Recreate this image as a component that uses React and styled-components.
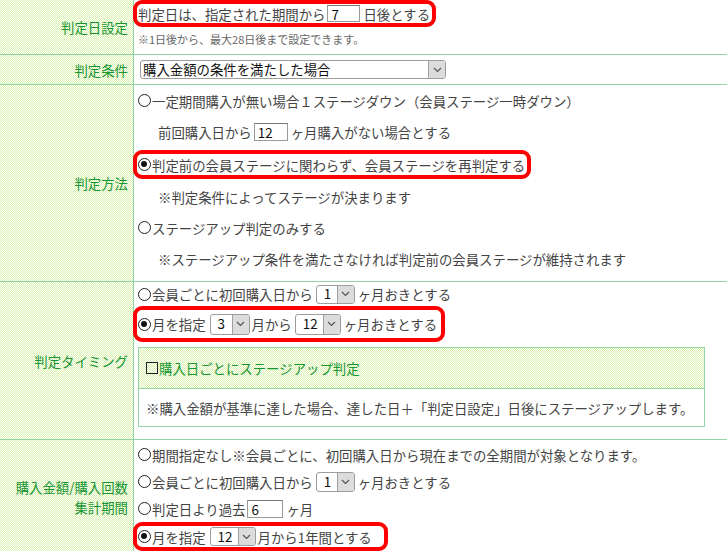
import React from "react"
import styled, { createGlobalStyle, css } from "styled-components"

const LINE = "#93d3a6"
const GREEN = "#16962f"

const GlobalStyle = createGlobalStyle`
    html, body {
        margin: 0;
        padding: 0;
        background: #fff;
        overflow: hidden;
    }
    body {
        font-family: "Noto Sans CJK JP", "Noto Sans", sans-serif;
        font-size: 13.4px;
        color: #444;
    }
`

const checker = css`
    background-color: #fff;
    background-image: repeating-conic-gradient(#d8f0ae 0 25%, #fff 0 50%);
    background-size: 2px 2px;
`

const Table = styled.div`
    width: 100%;
    display: flex;
    flex-direction: column;
`
const Row = styled.div`
    display: flex;
    border-bottom: 1px solid ${LINE};
`
const Label = styled.div`
    ${checker};
    width: 134px;
    flex-shrink: 0;
    box-sizing: border-box;
    border-right: 1px solid ${LINE};
    padding-right: 5px;
    display: flex;
    align-items: center;
    justify-content: flex-end;
    text-align: right;
    line-height: 20px;
    color: ${GREEN};
`
const Value = styled.div`
    flex: 1;
    min-width: 0;
    display: flex;
    flex-direction: column;
    align-items: flex-start;
    padding: ${(p) => p.$pad || "0"};
`
const Line = styled.div`
    display: flex;
    align-items: center;
    height: ${(p) => p.$h || 27}px;
    padding-left: ${(p) => p.$indent ?? 4}px;
    white-space: nowrap;
`
const Note = styled(Line)`
    font-size: 11px;
    color: #666;
`
const Highlight = styled.div`
    display: flex;
    align-items: center;
    box-sizing: border-box;
    height: ${(p) => p.$h}px;
    margin: ${(p) => p.$m || "0"};
    margin-left: -1px;
    padding: 0 ${(p) => p.$pr || 2}px 0 1px;
    border: 4px solid #f00;
    border-radius: 9px;
    white-space: nowrap;
`
const Radio = styled.span`
    position: relative;
    flex-shrink: 0;
    width: 13px;
    height: 13px;
    box-sizing: border-box;
    border: 1.5px solid #222;
    border-radius: 50%;
    margin-right: 1px;
    ${(p) => p.$checked && css`
        &::after {
            content: "";
            position: absolute;
            left: 2px;
            top: 2px;
            width: 6px;
            height: 6px;
            border-radius: 50%;
            background: #111;
        }
    `}
`
const Check = styled.span`
    flex-shrink: 0;
    width: 12px;
    height: 12px;
    box-sizing: border-box;
    border: 1.5px solid #222;
    margin-right: 1px;
`
const TextBox = styled.input`
    box-sizing: border-box;
    width: ${(p) => p.$w}px;
    height: ${(p) => p.$h || 18}px;
    margin: 0 3px 0 2px;
    padding: 0 0 0 3px;
    border: 1px solid #9a9a9a;
    border-top-color: #777;
    border-radius: 0;
    font: inherit;
    line-height: 1;
    color: #111;
    background: #fff;
    outline: none;
`
const SelectBox = styled.span`
    display: inline-flex;
    box-sizing: border-box;
    width: ${(p) => p.$w}px;
    height: ${(p) => p.$h || 19}px;
    margin: ${(p) => p.$m || "0 3px"};
    border: 1px solid #9d9d9d;
    border-radius: 3px;
    background: #fff;
    color: #111;
`
const SelectValue = styled.span`
    flex: 1;
    display: flex;
    align-items: center;
    padding-left: ${(p) => p.$pl ?? 7}px;
    line-height: 1;
`
const SelectArrow = styled.span`
    width: 16px;
    flex-shrink: 0;
    border-left: 1px solid #a0a0a0;
    border-radius: 0 2px 2px 0;
    background: #dcdcdc;
    display: flex;
    align-items: center;
    justify-content: center;
`
const SubBox = styled.div`
    width: 565px;
    margin: 5px 0 0 4px;
    border: 1px solid ${LINE};
`
const SubHead = styled.div`
    ${checker};
    height: 40px;
    display: flex;
    align-items: center;
    padding-left: 7px;
    border-bottom: 1px solid ${LINE};
    color: ${GREEN};
`
const SubBody = styled.div`
    height: 37px;
    display: flex;
    align-items: center;
    padding-left: 7px;
`

const Select = ({ value, w, h, pl, m }) => (
    <SelectBox $w={w} $h={h} $m={m}>
        <SelectValue $pl={pl}>{value}</SelectValue>
        <SelectArrow>
            <svg width="9" height="6" viewBox="0 0 9 6">
                <polyline points="1,1 4.5,4.5 8,1" fill="none" stroke="#555" strokeWidth="1.2" />
            </svg>
        </SelectArrow>
    </SelectBox>
)

const Input = ({ value, w, h }) => <TextBox readOnly value={value} $w={w} $h={h} />

const App = () => {
    return (
        <>
            <GlobalStyle />
            <Table>
                <Row>
                    <Label>判定日設定</Label>
                    <Value $pad="0 0 3px">
                        <Highlight $h={27}>
                            判定日は、指定された期間から<Input value="7" w={33} h={17} />日後とする
                        </Highlight>
                        <Note $h={24}>※1日後から、最大28日後まで設定できます。</Note>
                    </Value>
                </Row>

                <Row>
                    <Label>判定条件</Label>
                    <Value $pad="5px 0">
                        <Select value="購入金額の条件を満たした場合" w={306} pl={2} m="0 0 0 6px" />
                    </Value>
                </Row>

                <Row>
                    <Label>判定方法</Label>
                    <Value $pad="0 0 7px">
                        <Line $h={31}><Radio />一定期間購入が無い場合１ステージダウン（会員ステージ一時ダウン）</Line>
                        <Line $h={31} $indent={24}>前回購入日から<Input value="12" w={34} />ヶ月購入がない場合とする</Line>
                        <Highlight $h={29} $m="3px 0 2px" $pr={2}>
                            <Radio $checked />判定前の会員ステージに関わらず、会員ステージを再判定する
                        </Highlight>
                        <Line $h={31} $indent={24}>※判定条件によってステージが決まります</Line>
                        <Line $h={31}><Radio />ステージアップ判定のみする</Line>
                        <Line $h={31} $indent={24}>※ステージアップ条件を満たさなければ判定前の会員ステージが維持されます</Line>
                    </Value>
                </Row>

                <Row>
                    <Label>判定タイミング</Label>
                    <Value $pad="0 0 12px">
                        <Line $h={24}><Radio />会員ごとに初回購入日から<Select value="1" w={39} />ヶ月おきとする</Line>
                        <Highlight $h={36} $pr={4}>
                            <Radio $checked />月を指定<Select value="3" w={40} h={21} m="0 2px 0 4px" />月から<Select value="12" w={46} h={21} />ヶ月おきとする
                        </Highlight>
                        <SubBox>
                            <SubHead><Check />購入日ごとにステージアップ判定</SubHead>
                            <SubBody>※購入金額が基準に達した場合、達した日＋「判定日設定」日後にステージアップします。</SubBody>
                        </SubBox>
                    </Value>
                </Row>

                <Row>
                    <Label>購入金額/購入回数<br />集計期間</Label>
                    <Value $pad="1px 0 2px">
                        <Line><Radio />期間指定なし※会員ごとに、初回購入日から現在までの全期間が対象となります。</Line>
                        <Line><Radio />会員ごとに初回購入日から<Select value="1" w={39} h={20} />ヶ月おきとする</Line>
                        <Line><Radio />判定日より過去<Input value="6" w={36} />ヶ月</Line>
                        <Highlight $h={29} $pr={12}>
                            <Radio $checked />月を指定<Select value="12" w={46} h={19} m="0 2px 0 4px" />月から1年間とする
                        </Highlight>
                    </Value>
                </Row>
            </Table>
        </>
    )
}

export default App
